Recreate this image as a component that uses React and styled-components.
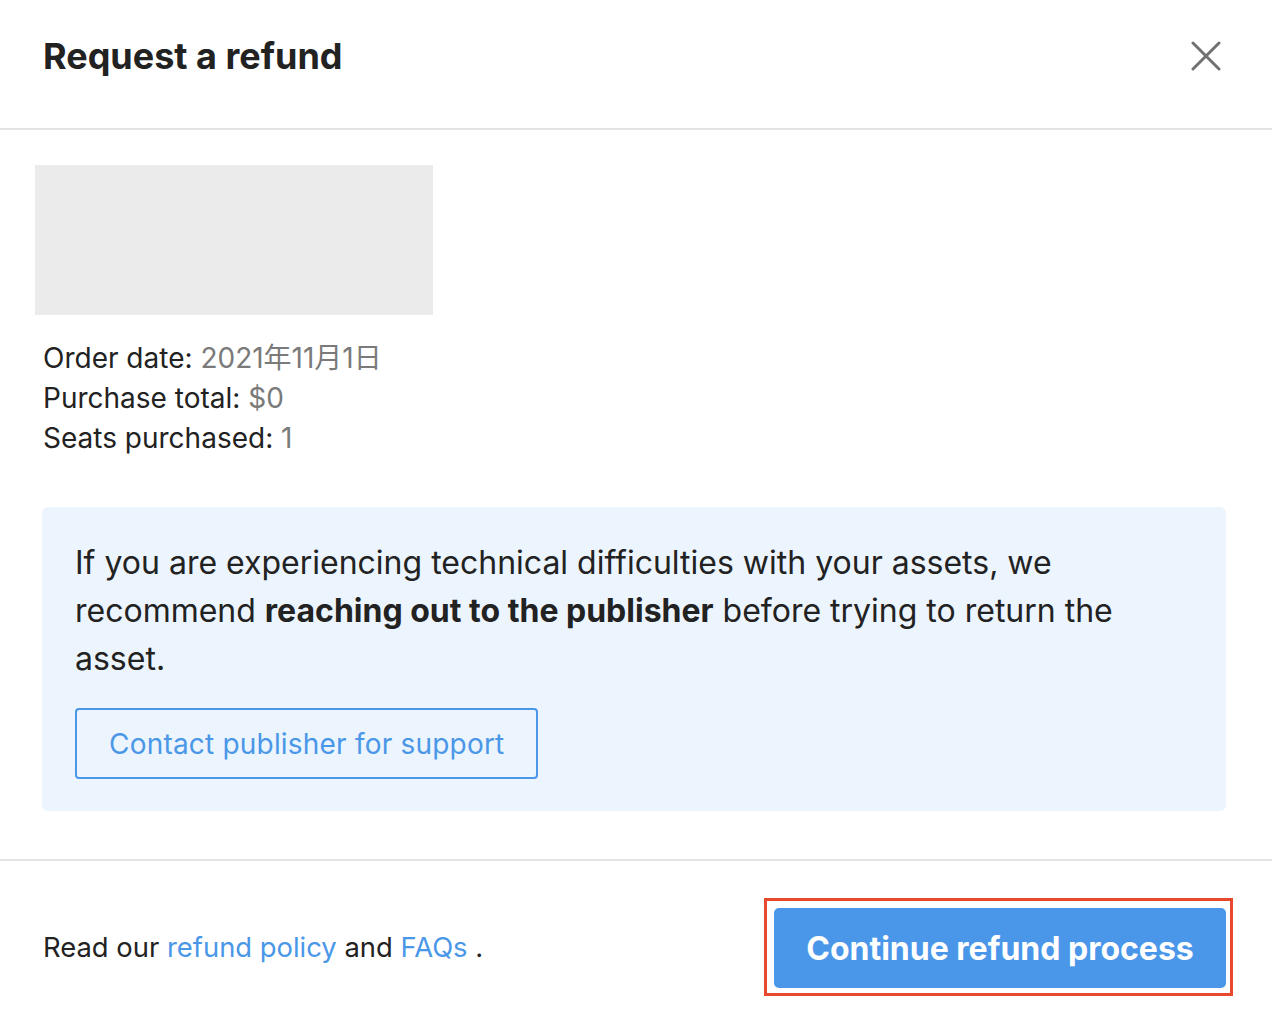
import styled, { createGlobalStyle } from "styled-components";

const GlobalStyle = createGlobalStyle`
body {
    margin: 0;
    background: #ffffff;
    font-family: Inter, "Noto Sans CJK JP", "Noto Sans", sans-serif;
    color: #222222;
}
`

const Modal = styled.div`
width: 1272px;
min-height: 1029px;
background: #ffffff;
display: flex;
flex-direction: column;
`

const Header = styled.div`
height: 130px;
box-sizing: border-box;
border-bottom: 2px solid #e3e3e3;
padding: 0 50px 16px 43px;
display: flex;
align-items: center;
justify-content: space-between;
`

const Title = styled.h1`
margin: 0;
font-size: 36px;
font-weight: 700;
color: #222222;
`

const CloseButton = styled.button`
border: none;
background: none;
padding: 0;
width: 32px;
height: 32px;
display: flex;
align-items: center;
justify-content: center;
cursor: pointer;
`

const Body = styled.div`
padding: 35px 46px 48px 42px;
border-bottom: 2px solid #e3e3e3;
`

const Thumbnail = styled.div`
width: 398px;
height: 150px;
margin-left: -7px;
background: #ebebeb;
`

const Details = styled.div`
margin-top: 23px;
padding-left: 1px;
font-size: 28px;
line-height: 40px;
`

const Label = styled.span`
color: #222222;
`

const Value = styled.span`
color: #7a7a7a;
`

const Notice = styled.div`
margin-top: 49px;
background: #ecf4fd;
border-radius: 6px;
padding: 32px 33px;
`

const NoticeText = styled.p`
margin: 0;
font-size: 32px;
line-height: 48px;
color: #222222;

strong {
    font-weight: 700;
}
`

const OutlineButton = styled.button`
margin-top: 25px;
height: 71px;
padding: 0 32px;
background: transparent;
border: 2px solid #4a97e8;
border-radius: 4px;
color: #4a97e8;
font-family: inherit;
font-size: 28px;
letter-spacing: 0.2px;
cursor: pointer;
`

const Footer = styled.div`
padding: 37px 39px 33px 43px;
display: flex;
align-items: center;
justify-content: space-between;
`

const FooterText = styled.p`
margin: 0;
font-size: 27.4px;
color: #222222;
`

const Link = styled.a`
color: #4a97e8;
text-decoration: none;
`

const Highlight = styled.div`
border: 3px solid #e8482c;
padding: 7px 4px 5px 7px;
display: flex;
`

const PrimaryButton = styled.button`
height: 80px;
width: 452px;
background: #4a97ea;
border: none;
border-radius: 5px;
color: #ffffff;
font-family: inherit;
font-size: 32px;
font-weight: 700;
cursor: pointer;
`

function App() {
    return (
        <>
            <GlobalStyle />
            <Modal>
                <Header>
                    <Title>Request a refund</Title>
                    <CloseButton aria-label="Close">
                        <svg width="30" height="30" viewBox="0 0 30 30">
                            <path d="M2 2 L28 28 M28 2 L2 28" stroke="#717171" strokeWidth="3" strokeLinecap="round" />
                        </svg>
                    </CloseButton>
                </Header>
                <Body>
                    <Thumbnail />
                    <Details>
                        <div><Label>Order date: </Label><Value>2021年11月1日</Value></div>
                        <div><Label>Purchase total: </Label><Value>$0</Value></div>
                        <div><Label>Seats purchased: </Label><Value>1</Value></div>
                    </Details>
                    <Notice>
                        <NoticeText>
                            If you are experiencing technical difficulties with your assets, we recommend{" "}
                            <strong>reaching out to the publisher</strong> before trying to return the asset.
                        </NoticeText>
                        <OutlineButton>Contact publisher for support</OutlineButton>
                    </Notice>
                </Body>
                <Footer>
                    <FooterText>
                        Read our <Link href="#">refund policy</Link> and <Link href="#">FAQs</Link> .
                    </FooterText>
                    <Highlight>
                        <PrimaryButton>Continue refund process</PrimaryButton>
                    </Highlight>
                </Footer>
            </Modal>
        </>
    );
}

export default App;
